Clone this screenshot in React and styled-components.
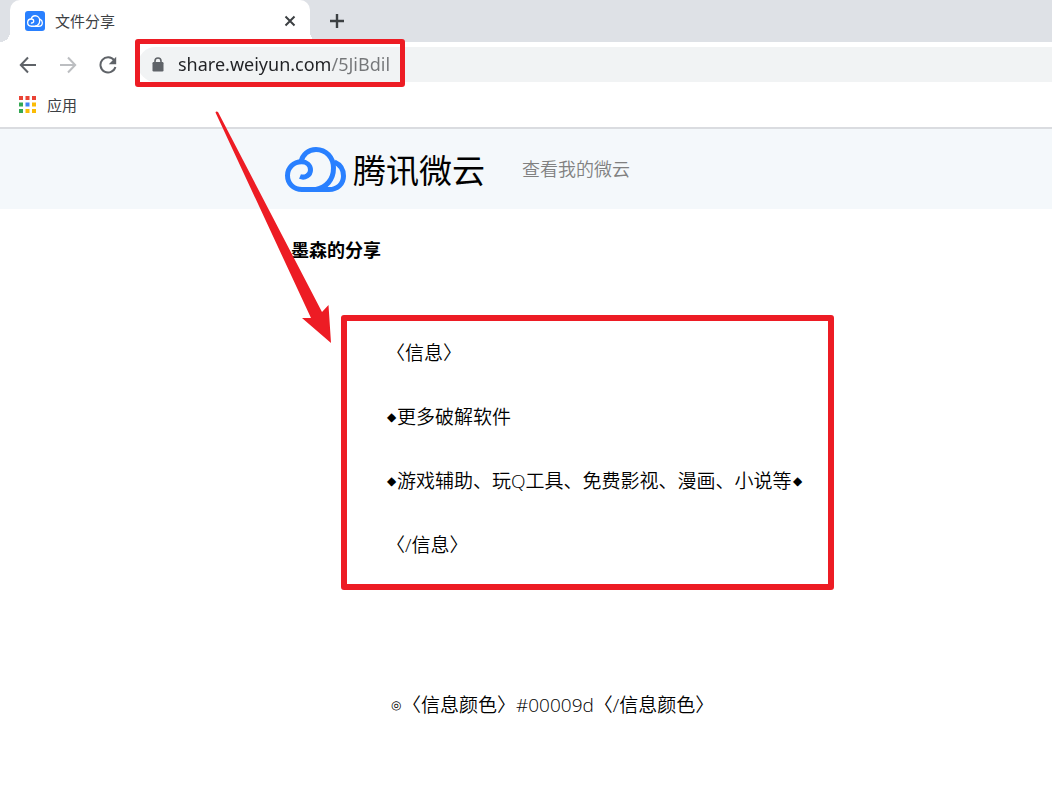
import React, { useState } from 'react'
import styled, { createGlobalStyle } from 'styled-components'


function App() {

  const [url, setUrl] = useState('share.weiyun.com/5JiBdil');

return (
    <Page>
      <GlobalStyle />
      <TabStrip>
        <Tab>
          <Favicon viewBox="0 0 20 20">
            <rect width="20" height="20" rx="3" fill="#2980ff" />
            <svg x="2" y="3.500" width="16" height="13" viewBox="0 0 61 45">
              <CloudShape color="#fff" width={5} />
            </svg>
          </Favicon>
          <TabTitle>文件分享</TabTitle>
          <TabButton aria-label="关闭">
            <svg width="12" height="12" viewBox="0 0 12 12">
              <path d="M1.5 1.5l9 9M10.5 1.5l-9 9" stroke="#3c4043" strokeWidth="2" />
            </svg>
          </TabButton>
        </Tab>
        <NewTab aria-label="新标签页">
          <svg width="16" height="16" viewBox="0 0 16 16">
            <path d="M8 1v14M1 8h14" stroke="#3c4043" strokeWidth="2.4" />
          </svg>
        </NewTab>
      </TabStrip>

      <Toolbar>
        <NavButton aria-label="后退">
          <svg width="18" height="18" viewBox="0 0 18 18" fill="none" stroke="#5f6368" strokeWidth="2">
            <path d="M17 9H2M9 1.5L1.8 9L9 16.5" />
          </svg>
        </NavButton>
        <NavButton aria-label="前进">
          <svg width="18" height="18" viewBox="0 0 18 18" fill="none" stroke="#bcbec1" strokeWidth="2">
            <path d="M1 9h15M9 1.5L16.2 9L9 16.5" />
          </svg>
        </NavButton>
        <NavButton aria-label="重新加载">
          <svg width="18" height="18" viewBox="0 0 18 18">
            <path d="M15.2 4.4A7.6 7.6 0 1 0 16.4 11" fill="none" stroke="#5f6368" strokeWidth="2" />
            <path d="M17.2 .8v7.4H9.8z" fill="#5f6368" />
          </svg>
        </NavButton>
        <AddressBar>
          <svg width="12" height="15" viewBox="0 0 12 15">
            <path d="M3 6V4a3 3 0 0 1 6 0v2" fill="none" stroke="#5f6368" strokeWidth="1.6" />
            <rect x="0.5" y="5" width="11" height="9.5" rx="1.2" fill="#5f6368" />
          </svg>
          <UrlInput
            type='text'
            aria-label="地址"
            value={url}
            onChange={e => setUrl(e.target.value)} />
        </AddressBar>
      </Toolbar>

      <BookmarkBar>
        <AppsLink href="#apps">
          <AppsIcon />
          应用
        </AppsLink>
      </BookmarkBar>

      <SiteHeader>
        <Logo>
          <svg width="61" height="45" viewBox="0 0 61 45">
            <CloudShape color="#2980ff" width={5} />
          </svg>
          <LogoText>腾讯微云</LogoText>
        </Logo>
        <HeaderLink href="#disk">查看我的微云</HeaderLink>
      </SiteHeader>

      <Content>
        <ShareTitle>墨森的分享</ShareTitle>
        <Note>
          <Line>〈信息〉</Line>
          <Line><Diamond>◆</Diamond>更多破解软件</Line>
          <Line><Diamond>◆</Diamond>游戏辅助、玩Q工具、免费影视、漫画、小说等<Diamond>◆</Diamond></Line>
          <Line>〈/信息〉</Line>
        </Note>
        <ColorNote><Ring>◎</Ring>〈信息颜色〉#00009d〈/信息颜色〉</ColorNote>
      </Content>

      <UrlMark />
      <NoteMark />
      <Arrow width="115" height="232" viewBox="0 0 115 232">
        <path d="M0.5 1.5Q1 0 3 1L107 201L113.500 194L116 232L87 207L96 207Z" fill="#ed1c24" />
      </Arrow>
    </Page>
);
}

export default App;


// 微云 cloud, used by the tab icon and the header logo
function CloudShape({ color, width }) {
  return (
    <g fill="none" stroke={color} strokeWidth={width}>
      <path d="M15 29.500C20 31.500 25.500 28 25.500 23C25.500 18 21.500 14.800 16.500 14.800C8.500 14.800 2.500 21 2.500 28.500C2.500 36.500 8.500 42.500 17 42.500H44C52.500 42.500 58.500 37 58.500 29C58.500 22 55 17.500 49.500 15" />
      <path d="M16 15C17.500 7.500 23.500 2.500 31 2.500C41 2.500 48.500 10.500 48.500 21C48.500 33 41 40.500 31 42.500" />
    </g>
  )
}

const AppsIcon = () => {
  const colors = ['#ea4335', '#ea4335', '#ea4335', '#34a853', '#4285f4', '#fbbc05', '#34a853', '#fbbc05', '#fbbc05']
  return (
    <svg width="17" height="17" viewBox="0 0 17 17">
      {colors.map((c, i) => (
        <rect key={i} x={(i % 3) * 6.5} y={Math.floor(i / 3) * 6.5} width="4" height="4" fill={c} />
      ))}
    </svg>
  )
}

const GlobalStyle = createGlobalStyle`
  body {
    margin: 0;
    background: #ffffff;
    font-family: "Noto Sans", "Noto Sans CJK SC", sans-serif;
  }

  svg {
    display: block;
    flex: none;
  }
`

const Page = styled.div`
  position: relative;
  min-height: 100vh;
  overflow: hidden;
`

/* the gradients draw the flared feet of the tab */
const TabStrip = styled.div`
  display: flex;
  align-items: center;
  height: 42px;
  padding-left: 10px;
  background: radial-gradient(circle at 0 0, transparent 10px, #ffffff 10px) 0 100% / 10px 10px no-repeat,
    radial-gradient(circle at 100% 0, transparent 10px, #ffffff 10px) 310px 100% / 10px 10px no-repeat,
    #dee1e6;
`

const Tab = styled.div`
  display: flex;
  align-items: center;
  box-sizing: border-box;
  width: 300px;
  height: 42px;
  padding: 0 12px 0 15px;
  border-radius: 10px 10px 0 0;
  background: #ffffff;
`

const Favicon = styled.svg`
  width: 20px;
  height: 20px;
`

const TabTitle = styled.span`
  flex: 1;
  margin-left: 10px;
  font-size: 15px;
  line-height: 20px;
  color: #3c4043;
`

const IconButton = styled.button`
  display: flex;
  align-items: center;
  justify-content: center;
  padding: 0;
  border: none;
  background: none;
  cursor: pointer;
`

const TabButton = styled(IconButton)`
  width: 16px;
  height: 16px;
`

const NewTab = styled(IconButton)`
  width: 34px;
  height: 34px;
  margin-left: 10px;
`

const Toolbar = styled.div`
  display: flex;
  align-items: center;
  height: 45px;
  padding-left: 18px;
`

const NavButton = styled(IconButton)`
  width: 20px;
  height: 20px;
  margin-right: 20px;
`

const AddressBar = styled.div`
  display: flex;
  align-items: center;
  flex: 1;
  height: 35px;
  padding-left: 14px;
  border-radius: 18px 0 0 18px;
  background: #f1f3f4;
`

/* the host part is dark, the path after it is grey */
const UrlInput = styled.input`
  flex: 1;
  height: 32px;
  margin-left: 14px;
  padding: 0 0 2px;
  box-sizing: border-box;
  border: none;
  outline: none;
  font-family: "Noto Sans", sans-serif;
  font-size: 18px;
  color: transparent;
  caret-color: #202124;
  background: linear-gradient(to right, #202124 153px, #757779 153px);
  background-clip: text;
`

const BookmarkBar = styled.div`
  display: flex;
  align-items: center;
  box-sizing: border-box;
  height: 42px;
  padding: 0 0 5px 19px;
  border-bottom: 2px solid #dadce0;
`

const AppsLink = styled.a`
  display: flex;
  align-items: center;
  gap: 11px;
  font-size: 15px;
  line-height: 20px;
  color: #3c4043;
  text-decoration: none;
`

const SiteHeader = styled.header`
  display: flex;
  align-items: center;
  height: 80px;
  padding-left: 285px;
  background: #f4f8fb;
`

const Logo = styled.div`
  display: flex;
  align-items: center;
  gap: 7px;
`

const LogoText = styled.span`
  padding-top: 4px;
  font-size: 33px;
  line-height: 40px;
  color: #000000;
`

const HeaderLink = styled.a`
  margin-left: 37px;
  font-size: 18px;
  font-weight: 350;
  line-height: 24px;
  color: #808080;
  text-decoration: none;
`

const Content = styled.main`
  padding: 29px 0 0 291px;
  color: #000000;
`

const ShareTitle = styled.h1`
  margin: 0;
  font-size: 18px;
  font-weight: 700;
  line-height: 24px;
`

const Note = styled.div`
  display: flex;
  flex-direction: column;
  gap: 32px;
  margin: 75px 0 0 95px;
`

const Line = styled.p`
  margin: 0;
  font-family: "Open Sans", "Noto Sans CJK SC", sans-serif;
  font-size: 19px;
  font-weight: 350;
  line-height: 32px;
  white-space: nowrap;
`

const ColorNote = styled(Line)`
  margin: 128px 0 0 95px;
`

const Symbol = styled.span`
  display: inline-block;
  box-sizing: border-box;
  font-family: "DejaVu Sans", sans-serif;
  font-size: 12px;
  line-height: 16px;
  text-align: center;
  vertical-align: 3px;
`

const Diamond = styled(Symbol)`
  width: 11px;
`

const Ring = styled(Symbol)`
  width: 16px;
  padding-left: 4px;
`

const RedBox = styled.div`
  position: absolute;
  box-sizing: border-box;
  border: solid #ed1c24;
  border-radius: 3px;
  pointer-events: none;
`

const UrlMark = styled(RedBox)`
  top: 39px;
  left: 135px;
  width: 270px;
  height: 48px;
  border-width: 5px;
`

const NoteMark = styled(RedBox)`
  top: 315px;
  left: 341px;
  width: 493px;
  height: 275px;
  border-width: 6px;
`

const Arrow = styled.svg`
  position: absolute;
  top: 111px;
  left: 215px;
  overflow: visible;
  pointer-events: none;
`
